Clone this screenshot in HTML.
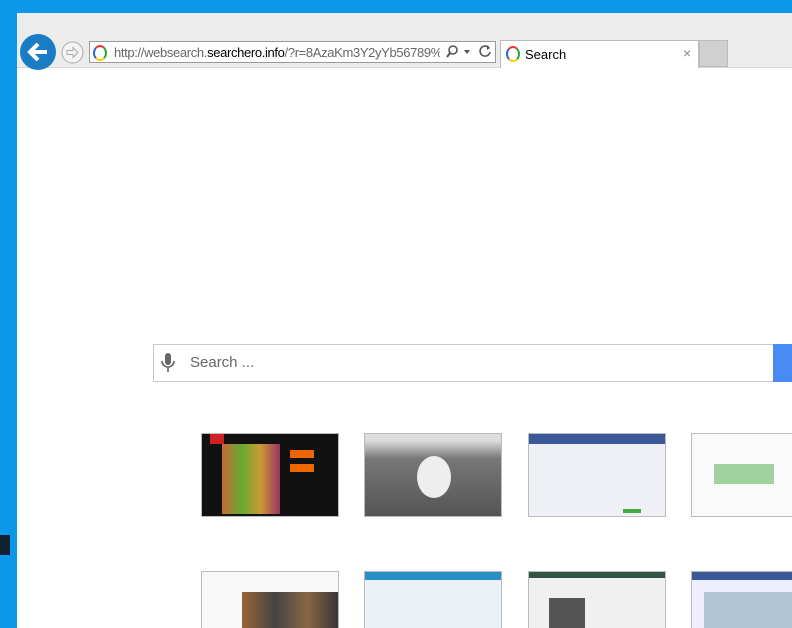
<html style="overflow:hidden;height:628px"><head><style>
body{margin:0;width:792px;height:628px;overflow:hidden;background:#0c97e8;font-family:"Liberation Sans",sans-serif;position:relative}
.a{position:absolute}
.th{position:absolute;width:138px;height:84px;border:1px solid #bbb;box-sizing:border-box;overflow:hidden}
.r2{height:57px;border-bottom:none}
</style></head><body>
<div class="a" style="left:17px;top:13px;width:775px;height:55px;background:#ececec"></div>
<div class="a" style="left:17px;top:67px;width:775px;height:561px;background:#fff;border-top:1px solid #d8d8d8"></div>
<div class="a" style="left:0;top:535px;width:10px;height:20px;background:#123"></div>
<svg class="a" style="left:20px;top:34px" width="36" height="36"><circle cx="18" cy="18" r="18" fill="#1a7cc4"/><path d="M27 18H11M18 10l-8 8 8 8" stroke="#fff" stroke-width="4" fill="none"/></svg>
<svg class="a" style="left:61px;top:41px" width="23" height="23"><circle cx="11.5" cy="11.5" r="10.5" fill="#f4f4f4" stroke="#aaa"/><path d="M6 9.5h6v-3l5 5-5 5v-3H6z" fill="none" stroke="#aaa"/></svg>
<div class="a" style="left:89px;top:41px;width:407px;height:22px;border:1px solid #999;background:#fff;box-sizing:border-box"></div>
<div class="a" style="left:93px;top:45px;width:10px;height:12px;border-radius:50%;border:2px solid;border-color:#e33 #2a4 #fc0 #36c"></div>
<div class="a" style="left:114px;top:45px;width:326px;overflow:hidden;font-size:13px;color:#666;white-space:nowrap;letter-spacing:-0.35px">http://websearch.<span style="color:#000">searchero.info</span>/?r=8AzaKm3Y2yYb56789%2FI</div>
<svg class="a" style="left:445px;top:44px" width="50" height="16"><circle cx="8" cy="6" r="4" fill="none" stroke="#555" stroke-width="1.6"/><path d="M5 9l-3 4" stroke="#555" stroke-width="2"/><path d="M19 6h6l-3 4z" fill="#555"/><path d="M44 4a5 5 0 1 0 1 4" fill="none" stroke="#555" stroke-width="1.6"/><path d="M42 1l3 3-3 2z" fill="#555"/></svg>
<div class="a" style="left:500px;top:40px;width:199px;height:28px;background:#fff;border:1px solid #bbb;border-bottom:none;box-sizing:border-box"></div>
<div class="a" style="left:506px;top:46px;width:10px;height:12px;border-radius:50%;border:2px solid;border-color:#e33 #2a4 #fc0 #36c"></div>
<div class="a" style="left:525px;top:47px;font-size:13px">Search</div>
<div class="a" style="left:683px;top:45px;font-size:14px;color:#888">×</div>
<div class="a" style="left:699px;top:40px;width:29px;height:27px;background:#d0d0d0;border:1px solid #bbb;box-sizing:border-box"></div>
<div class="a" style="left:153px;top:344px;width:621px;height:38px;border:1px solid #c8c8c8;box-sizing:border-box;background:#fff"></div>
<div class="a" style="left:773px;top:344px;width:19px;height:38px;background:#4a8af4"></div>
<svg class="a" style="left:160px;top:352px" width="16" height="22"><rect x="5" y="1" width="6" height="12" rx="3" fill="#666"/><path d="M2 9a6 6 0 0 0 12 0M8 15v5" stroke="#666" stroke-width="1.6" fill="none"/></svg>
<div class="a" style="left:190px;top:354px;font-size:15px;color:#666">Search ...</div>
<div class="th" style="left:201px;top:433px;background:#111"><div class="a" style="left:8px;top:0;width:14px;height:10px;background:#c22"></div><div class="a" style="left:20px;top:10px;width:58px;height:70px;background:linear-gradient(90deg,#c63,#6a3,#c93,#936)"></div><div class="a" style="left:88px;top:16px;width:24px;height:8px;background:#e60"></div><div class="a" style="left:88px;top:30px;width:24px;height:8px;background:#e60"></div></div>
<div class="th" style="left:364px;top:433px;background:linear-gradient(#ddd 8%,#777 30%,#555)"><div class="a" style="left:52px;top:22px;width:34px;height:42px;border-radius:50%;background:#eee"></div></div>
<div class="th" style="left:528px;top:433px;background:#eef0f5"><div style="height:10px;background:#3b5998"></div><div class="a" style="left:94px;top:75px;width:18px;height:4px;background:#4a4"></div></div>
<div class="th" style="left:691px;top:433px;width:110px;background:#fafafa"><div class="a" style="left:22px;top:30px;width:60px;height:20px;background:#4a4;opacity:.5"></div></div>
<div class="th r2" style="left:201px;top:571px;background:#f8f8f8"><div class="a" style="left:40px;top:20px;width:98px;height:40px;background:linear-gradient(90deg,#963,#444,#864,#333)"></div></div>
<div class="th r2" style="left:364px;top:571px;background:#eaf2f8"><div style="height:8px;background:#2a8fc8"></div></div>
<div class="th r2" style="left:528px;top:571px;background:#f0f0f0"><div style="height:6px;background:#354"></div><div class="a" style="left:20px;top:26px;width:36px;height:40px;background:#555"></div></div>
<div class="th r2" style="left:691px;top:571px;width:110px;background:#eef"><div style="height:8px;background:#3b5998"></div><div class="a" style="left:12px;top:20px;width:90px;height:40px;background:#8ab;opacity:.6"></div></div>
</body></html>
